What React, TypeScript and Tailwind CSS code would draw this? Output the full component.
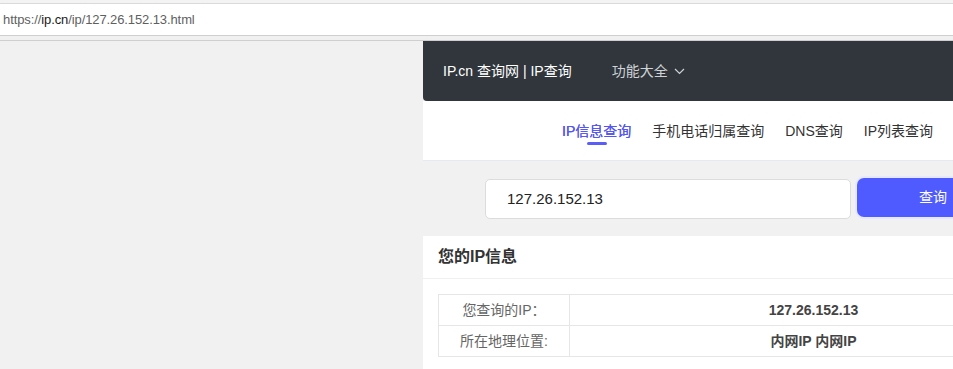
import React from "react";

const FONT = { fontFamily: '"Liberation Sans", "Noto Sans CJK SC", sans-serif' };

export default function App() {
  return (
    <div
      className="w-[953px] h-[369px] overflow-hidden bg-[#f1f1f1] text-[#333]"
      style={FONT}
    >
      {/* browser address bar */}
      <div className="h-[4px] bg-[#f3f3f3] border-b border-[#dadada]" />
      <div className="h-[31px] bg-white flex items-center pl-[3px] text-[13px] tracking-[-0.1px] text-[#5f5f5f] leading-none">
        <span>https://</span>
        <span className="text-[#1a1a1a]">ip.cn</span>
        <span>/ip/127.26.152.13.html</span>
      </div>
      <div className="h-[6px] bg-[#f0f0f0] border-y border-[#cfcfcf]" />

      <div className="flex">
        <div className="w-[423px] shrink-0" />
        <div className="w-[650px] shrink-0">
          {/* dark header */}
          <div className="h-[60px] bg-[#30363c] rounded-b-[4px] flex items-center pl-[20px]">
            <span className="text-white text-[14px] leading-none">IP.cn 查询网 | IP查询</span>
            <span className="ml-[40px] text-[#cfd2d6] text-[14px] leading-none flex items-center">
              功能大全
              <svg width="11" height="7" viewBox="0 0 11 7" className="ml-[6px]">
                <polyline points="1,1 5.5,5.5 10,1" fill="none" stroke="#cfd2d6" strokeWidth="1.2" />
              </svg>
            </span>
          </div>

          {/* nav */}
          <div className="h-[60px] bg-white border-b border-[#e6e8f3] flex items-center pl-[139px] gap-[21px] text-[14px] leading-none">
            <div className="relative text-[#5356f2] [text-shadow:0_0_0.3px_#5356f2]">
              IP信息查询
              <div className="absolute left-1/2 -translate-x-1/2 top-[18px] w-[20px] h-[3px] rounded-full bg-[#5b5ef5]" />
            </div>
            <div className="text-[#333]">手机电话归属查询</div>
            <div className="text-[#333]">DNS查询</div>
            <div className="text-[#333]">IP列表查询</div>
          </div>

          {/* search */}
          <div className="flex items-start mt-[18px] pl-[62px] gap-[6px]">
            <div className="w-[366px] h-[40px] bg-white border border-[#dcdcdc] rounded-[5px] flex items-center pl-[21px] text-[15px] text-[#222]">
              127.26.152.13
            </div>
            <div className="-mt-[1px] w-[150px] h-[39px] bg-[#4f5bfe] rounded-[7px] ring-2 ring-[#e6e8ff] flex items-center justify-center pl-[2px] text-white text-[14px]">
              查询
            </div>
          </div>

          {/* info card */}
          <div className="mt-[17px] bg-white">
            <div className="h-[43px] border-b border-[#f0f0f0] flex items-center pl-[15px] text-[16px] font-bold text-[#333]">
              您的IP信息
            </div>
            <div className="pt-[15px] pl-[15px] pb-[12px]">
              <table className="w-[620px] border-collapse text-[14px]">
                <tbody>
                  <tr className="h-[31px]">
                    <td className="w-[131px] border border-[#e6e6e6] text-center text-[#666]">您查询的IP：</td>
                    <td className="border border-[#e6e6e6] text-center font-bold text-[#444]">127.26.152.13</td>
                  </tr>
                  <tr className="h-[31px]">
                    <td className="border border-[#e6e6e6] text-center text-[#666]">所在地理位置:</td>
                    <td className="border border-[#e6e6e6] text-center font-bold text-[#444]">内网IP 内网IP</td>
                  </tr>
                </tbody>
              </table>
            </div>
          </div>
        </div>
      </div>
    </div>
  );
}
